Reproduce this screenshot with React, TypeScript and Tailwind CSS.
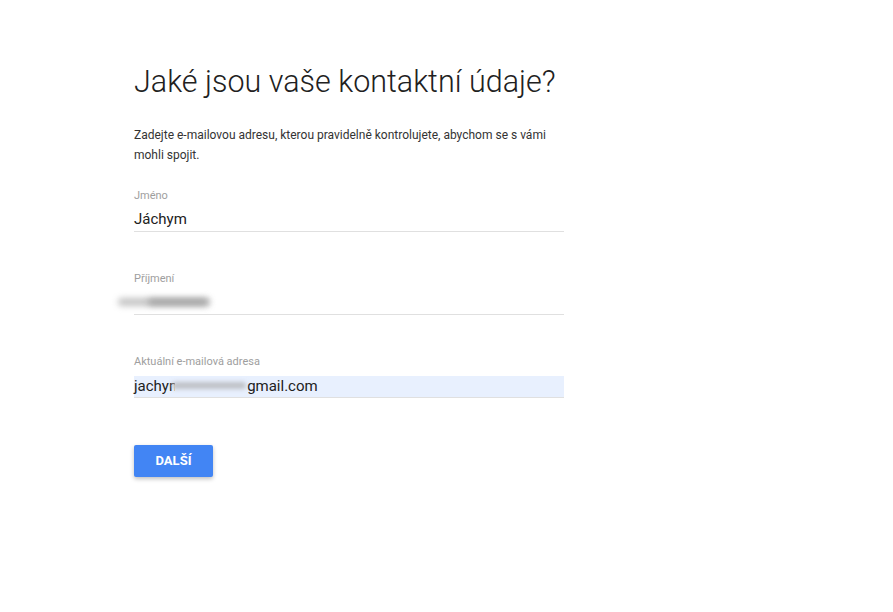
export default function App() {
  return (
    <div className="min-h-screen bg-white font-['Roboto',sans-serif]">
      <div className="ml-[134px] w-[430px] pt-[64px]">
        {/* Title */}
        <h1 className="text-[30.5px] leading-[36px] font-light text-[#212121]">
          Jaké jsou vaše kontaktní údaje?
        </h1>

        <p className="mt-[25px] text-[12px] leading-[20px] text-[#333]">
          Zadejte e-mailovou adresu, kterou pravidelně kontrolujete, abychom se s vámi mohli spojit.
        </p>

        {/* Fields */}
        <div className="mt-[23px] flex flex-col gap-[39px]">
          <div>
            <div className="pt-[1px] text-[11px] leading-[14px] text-[#9e9e9e]">Jméno</div>
            <div className="mt-[5px] h-[24px] border-b border-[#e0e0e0] text-[15px] leading-[23px] text-[#212121]">
              Jáchym
            </div>
          </div>

          <div>
            <div className="pt-[1px] text-[11px] leading-[14px] text-[#9e9e9e]">Příjmení</div>
            <div className="relative mt-[5px] h-[24px] border-b border-[#e0e0e0]">
              <div className="absolute left-[-16px] top-[7px] h-[8px] w-[92px] rounded-full bg-[#c4c4c4] blur-[3px]" />
              <div className="absolute left-[14px] top-[8px] h-[6px] w-[60px] rounded-full bg-[#a0a0a0] blur-[3px]" />
            </div>
          </div>

          <div>
            <div className="pt-[1px] text-[11px] leading-[14px] text-[#9e9e9e]">Aktuální e-mailová adresa</div>
            <div className="mt-[5px] border-b border-[#e0e0e0] pt-[2px]">
              <div className="relative h-[21px] bg-[#e8f0fe] text-[15px] leading-[20px] text-[#212121]">
                <span>jachym</span>
                <span className="inline-block w-[65px]" />
                <span>gmail.com</span>
                <div className="absolute left-[41px] top-[3px] h-[14px] w-[71px] bg-[#e8f0fe]" />
                <div className="absolute left-[38px] top-[6px] h-[7px] w-[74px] rounded-full bg-[#bfc2c7] blur-[2px]" />
              </div>
            </div>
          </div>
        </div>

        <button className="mt-[47px] h-[32px] w-[79px] rounded-[2px] bg-[#4285f4] text-[13px] font-bold text-white shadow-[0_2px_4px_rgba(0,0,0,0.25)]">
          DALŠÍ
        </button>
      </div>
    </div>
  );
}
